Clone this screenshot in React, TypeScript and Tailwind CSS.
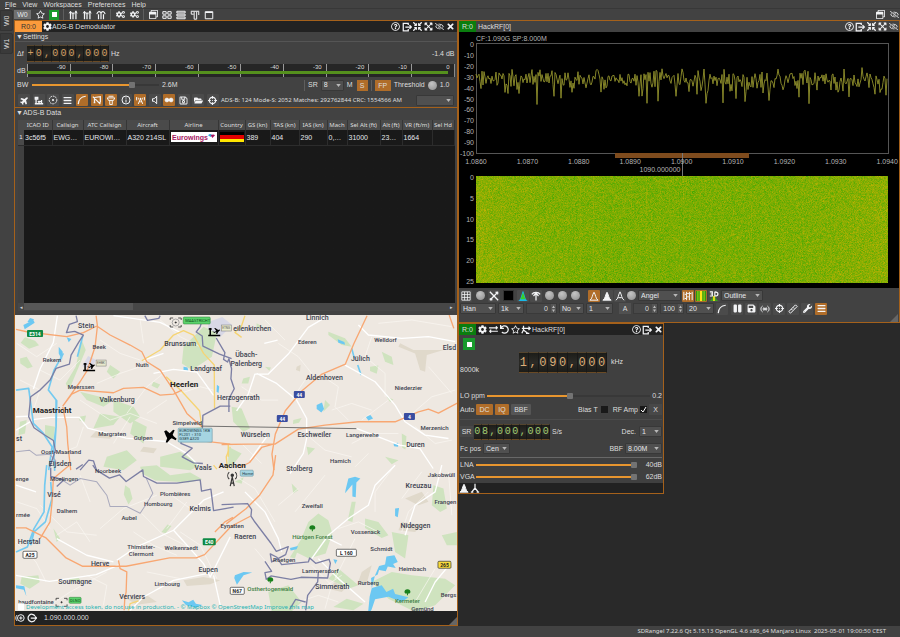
import { useEffect, useRef, useState } from 'react';
import type { ReactNode } from 'react';
import {
  FaBars,
  FaBroadcastTower,
  FaCog,
  FaCogs,
  FaCompressArrowsAlt,
  FaCrosshairs,
  FaExchangeAlt,
  FaExpandArrowsAlt,
  FaFolderOpen,
  FaPause,
  FaPlane,
  FaRegEyeSlash,
  FaRegQuestionCircle,
  FaRegSave,
  FaRegStar,
  FaRegWindowRestore,
  FaSave,
  FaTimes,
  FaUndo,
  FaWrench,
} from 'react-icons/fa';

type IconProps = { children: ReactNode };

function Draw({ children }: IconProps) {
  return (
    <svg viewBox="0 0 12 12" className="size-[10px]" fill="none" stroke="currentColor" strokeWidth="1.2">
      {children}
    </svg>
  );
}

const Sliders = () => (
  <Draw>
    <path d="M3 2v9M6 4v7M9.500 1v10" strokeWidth="1.500" />
    <path d="M1.500 4 3 1.500 4.500 4M8 4 9.500 1.500 11 4M4.500 5 6 3l1.500 2" />
  </Draw>
);
const Antennas = () => (
  <Draw>
    <path d="M3 5v6M6 4v7M9 5v6M1 5c1-4 4-4 5-1 1-3 4-3 5 1" strokeWidth="1.400" />
  </Draw>
);
const Grid4 = () => (
  <Draw>
    <path d="M1 2h4v3H1zM7 2h4v3H7zM1 7h4v3H1zM7 7h4v3H7z" />
  </Draw>
);
const Rows = () => (
  <Draw>
    <path d="M1 1.500h10v2H1zM1 5h10v2H1zM1 8.500h10v2H1z" />
  </Draw>
);
const Columns = () => (
  <Draw>
    <path d="M1 1.500h10M1.500 2v3h3M5 2v9h3V2M10.500 2v4" />
  </Draw>
);
const Frame = () => (
  <Draw>
    <path d="M1.500 2h9v8.500h-9zM1.500 3h9" />
  </Draw>
);
const Exit = () => (
  <Draw>
    <path d="M7.500 3.500V1.500h-6v9h6v-2" strokeWidth="1.500" />
    <path d="M4 6h7M9 3.800 11.200 6 9 8.200" strokeWidth="1.500" />
  </Draw>
);
const Compass = () => (
  <Draw>
    <circle cx="6" cy="6" r="4.600" strokeDasharray="2 1" />
    <circle cx="6" cy="6" r=".8" fill="currentColor" />
  </Draw>
);
const Tower = () => (
  <Draw>
    <path d="M1 10.500h10M2.500 10V3.500M1.500 3h3v2h-3zM4.500 8h5M6 10V7M9 10V6" strokeWidth="1.600" />
  </Draw>
);
const Curve = () => (
  <Draw>
    <path d="M1.500 11C2 5 4 2 10.500 1.500" strokeWidth="1.500" />
  </Draw>
);
const CutCurve = () => (
  <Draw>
    <path d="M1 2l9 9M3 3v6M3 3l7-1v7M2 9h2M8 9h2" strokeWidth="1.500" />
  </Draw>
);
const TowerFull = () => (
  <Draw>
    <path d="M1.500 3.500h9L9 6.500H3zM4.500 7v4.500h3V7M3 1.500h6" />
  </Draw>
);
const Info = () => (
  <Draw>
    <circle cx="6" cy="6" r="4.800" />
    <path d="M6 5.500V9M6 3v1.300" />
  </Draw>
);
const Speaker = () => (
  <Draw>
    <path d="M3 4.500h2l3-3v9l-3-3H3z" />
  </Draw>
);
const Dots = () => (
  <Draw>
    <circle cx="3.500" cy="6" r="2.200" fill="currentColor" />
    <circle cx="8.500" cy="6" r="2.200" fill="currentColor" />
    <path d="M3 6h6" />
  </Draw>
);
const Table = () => (
  <Draw>
    <path d="M1 1h10v10H1zM4.300 1v10M7.700 1v10M1 4.300h10M1 7.700h10" strokeWidth="1" />
  </Draw>
);
const Cross = () => (
  <Draw>
    <path d="M1 1l10 10M11 1 1 11M1 9l3 2M8 1l3 3" strokeWidth="1.600" />
  </Draw>
);
const Rainbow = () => (
  <svg viewBox="0 0 12 12" className="size-[10px]">
    <path d="M0 12C4 11 4 2 6 0c2 2 2 11 6 12z" fill="#19b8e8" />
    <path d="M2.500 10C4.500 8 5 3 6 2c1 1 1.500 6 3.500 8z" fill="#38d028" />
  </svg>
);
const ArrowUp = () => (
  <Draw>
    <path d="M6 11.500V2.500M3 6l3-3.500L9 6M1 4C3 .800 9 .800 11 4" strokeWidth="1.500" />
  </Draw>
);
const Peak = ({ filled = false }: { filled?: boolean }) => (
  <Draw>
    <path d="M1 11c3-1 3-7 5-9.500C8 4 8 10 11 11z" fill={filled ? 'currentColor' : 'none'} />
  </Draw>
);
const PeakHold = () => (
  <Draw>
    <path d="M1 11c3-1 3-7 5-10 2 3 2 9 5 10M4 8h4" />
  </Draw>
);
const Histogram = () => (
  <Draw>
    <path d="M1 1v10M4.300 1v10M7.700 1v10M11 1v10M2 4h2M5 7h2M8 3h2M5 3h2M2 9h2" />
  </Draw>
);
const Fall = () => (
  <svg viewBox="0 0 12 12" className="size-[10px]">
    <path d="M0 0h12v12H0z" fill="#2e9b12" />
    <path d="M4.500 0h3v12h-3z" fill="#ffe31a" />
    <path d="M1.500 0H3v12H1.500zM9 0h1.500v12H9z" fill="#8fc912" />
  </svg>
);
const ThreeD = () => (
  <svg viewBox="0 0 12 12" className="size-[10px]">
    <path d="M0 12c4-1 4-6 6-7 2 1 2 6 6 7z" fill="#3aa21d" />
    <path d="M5 6h2v6H5z" fill="#ffe31a" />
    <path d="M1 1h3v5H1M2 3.500h2M7 1v5c5 0 5-5 0-5" stroke="#fff" fill="none" strokeWidth="1.300" />
  </svg>
);
const Waves = () => (
  <Draw>
    <path d="M3 2.500C.5 4 .5 8 3 9.500M9 2.500c2.500 1.500 2.500 5.500 0 7M4.800 4c-1.300 1-1.300 3 0 4M7.200 4c1.300 1 1.300 3 0 4" />
    <circle cx="6" cy="6" r=".8" fill="currentColor" />
  </Draw>
);
const RulerIcon = () => (
  <Draw>
    <path d="M1 9 9 1l2 2-8 8zM4 6l1.500 1.500M6 4l1.500 1.500" />
  </Draw>
);
const Tripod = () => (
  <Draw>
    <path d="M6 1v5M6 6 2 11M6 6l4 5M1 11h3M8 11h3" strokeWidth="1.500" />
  </Draw>
);
const Presets = () => (
  <Draw>
    <path d="M3 1v5M3 6 1 10M3 6l5 4M1 4h10M9 2l2 2-2 2M6 10h4" strokeWidth="1.500" />
  </Draw>
);
const Source = () => (
  <Draw>
    <circle cx="7" cy="6" r="4" />
    <path d="M5 6h4M7 4v4M2.500 2.500C.5 4 .5 8 2.500 9.500" />
  </Draw>
);
const Loop = () => (
  <Draw>
    <path d="M9.500 3.500a4.500 4.500 0 1 0 0 5M4.500 6h7M9.500 4l2 2-2 2" strokeWidth="1.500" />
  </Draw>
);

type IconButtonProps = { label: string; on?: boolean; children: ReactNode };

function IconButton({ label, on = false, children }: IconButtonProps) {
  return (
    <button
      aria-label={label}
      className={`size-[12px] shrink-0 flex items-center justify-center rounded-[1px] text-[9px] text-gray-100 ${
        on ? 'bg-[#b06d29]' : 'bg-[#4b4b4b]'
      }`}
    >
      {children}
    </button>
  );
}

function BarButton({ label, children }: IconButtonProps) {
  return (
    <button aria-label={label} className="size-[10px] shrink-0 flex items-center justify-center text-[9px] text-gray-100">
      {children}
    </button>
  );
}

type DropProps = { label: string; value: string; width: string };

function Drop({ label, value, width }: DropProps) {
  return (
    <span className={`relative shrink-0 h-[11px] ${width}`}>
      <select
        aria-label={label}
        className="block w-full h-full appearance-none rounded-[1px] border border-[#383838] bg-[#505050] pl-[2px] text-gray-200"
      >
        <option>{value}</option>
      </select>
      <svg viewBox="0 0 6 4" className="absolute right-[3px] top-[4px] w-[5px] h-[3px] pointer-events-none">
        <path d="M0 0h6L3 4z" fill="#b8b8b8" />
      </svg>
    </span>
  );
}

type SpinProps = { label: string; value: string; width: string };

function Spin({ label, value, width }: SpinProps) {
  return (
    <span className={`flex shrink-0 h-[11px] bg-[#484848] border border-[#3a3a3a] ${width}`}>
      <input aria-label={label} defaultValue={value} className="min-w-0 flex-1 bg-transparent text-right pr-[3px]" />
      <svg viewBox="0 0 5 9" className="w-[5px] h-[9px] bg-[#555]" fill="#bbb">
        <path d="M1 4h3L2.500 1.500zM1 5.500h3L2.500 8z" />
      </svg>
    </span>
  );
}

function Knob({ label }: { label: string }) {
  return (
    <button
      aria-label={label}
      className="size-[9px] shrink-0 rounded-full bg-[radial-gradient(circle_at_40%_30%,#c4c4c4,#8d8d8d)]"
    />
  );
}

type SliderProps = { label: string; start: number };

function Slider({ label, start }: SliderProps) {
  const [value, setValue] = useState(start);
  return (
    <input
      type="range"
      aria-label={label}
      value={value}
      onChange={(e) => setValue(Number(e.target.value))}
      className="min-w-0 flex-1 h-[2px] appearance-none [&::-webkit-slider-thumb]:appearance-none [&::-webkit-slider-thumb]:size-[6px] [&::-webkit-slider-thumb]:rounded-[1px] [&::-webkit-slider-thumb]:bg-[#737373]"
      style={{ background: `linear-gradient(90deg, #e8962f ${value}%, #383838 ${value}%)` }}
    />
  );
}

type DialProps = { label: string; digits: string; size: string; color: string };

function Dial({ label, digits, size, color }: DialProps) {
  return (
    <div
      role="group"
      aria-label={label}
      className={`flex shrink-0 overflow-hidden bg-linear-to-b from-[#1b1b17] via-[#2b2a26] to-[#1b1b17] font-['Liberation_Mono'] ${size} ${color}`}
    >
      {digits.split('').map((d, i) => (
        <span
          key={i}
          className="min-w-0 flex-1 flex items-center justify-center border-r border-r-[#181818] border-t border-t-[#55452e] border-b border-b-[#6a4a25]"
        >
          {d}
        </span>
      ))}
    </div>
  );
}

function WindowButtons({ close = true }: { close?: boolean }) {
  return (
    <div className="ml-auto flex gap-px">
      <BarButton label="Help"><FaRegQuestionCircle /></BarButton>
      <BarButton label="Move to workspace"><Exit /></BarButton>
      <BarButton label="Shrink"><FaCompressArrowsAlt /></BarButton>
      <BarButton label="Maximize"><FaExpandArrowsAlt /></BarButton>
      <BarButton label="Hide"><FaRegEyeSlash /></BarButton>
      {close && <BarButton label="Close"><FaTimes /></BarButton>}
    </div>
  );
}

const Rule = () => <i className="h-[11px] w-px shrink-0 bg-[#5e5e5e]" />;

function TopBar() {
  return (
    <div className="h-[12px] pr-px flex items-center gap-[4px] border-t border-[#383838]">
      <button className="w-[17px] h-[9px] bg-[#707070] text-gray-200 leading-[9px]">W0</button>
      <BarButton label="Presets"><FaRegStar /></BarButton>
      <button aria-label="Start or stop" className="size-[10px] bg-[#189a2c] flex items-center justify-center">
        <span className="size-[5px] bg-white" />
      </button>
      <Rule />
      <BarButton label="Add Rx"><Sliders /></BarButton>
      <BarButton label="Add Tx"><Sliders /></BarButton>
      <BarButton label="Add MIMO"><Antennas /></BarButton>
      <Rule />
      <BarButton label="Add feature"><FaCogs /></BarButton>
      <BarButton label="Feature presets"><FaCogs /></BarButton>
      <Rule />
      <BarButton label="Cascade"><FaRegWindowRestore /></BarButton>
      <BarButton label="Tile"><Grid4 /></BarButton>
      <BarButton label="Stack"><Rows /></BarButton>
      <BarButton label="Tab stack"><Columns /></BarButton>
      <BarButton label="Tabs"><Frame /></BarButton>
      <div className="ml-auto flex gap-[4px]">
        <BarButton label="Normal"><FaRegWindowRestore /></BarButton>
        <BarButton label="Hide workspace"><FaRegEyeSlash /></BarButton>
      </div>
    </div>
  );
}

const levels = [-90, -80, -70, -60, -50, -40, -30, -20, -10, 0];

function LevelMeter() {
  return (
    <div className="relative flex-1 h-[13px] flex bg-[#262626] border-r border-[#8a8a8a]">
      {levels.map((l) => (
        <span key={l} className="flex-1 border-l border-[#9a9a9a] pr-[4px] text-right text-[6px] leading-[6px]">
          {l}
        </span>
      ))}
      <span className="absolute left-0 right-[6px] top-[7px] h-[3px] bg-[#55901d]" />
    </div>
  );
}

function Airline() {
  return (
    <span className="flex items-center justify-center h-[10px] bg-white text-[#a5155f] font-bold">
      Eurowings
      <svg viewBox="0 0 8 8" className="w-[7px] h-[8px]">
        <path d="M0 2C2 0 3 0 5 2L3 4z" fill="#35a8d8" />
        <path d="M3 2c2-1 4-1 5 0L5 5z" fill="#a5155f" />
      </svg>
    </span>
  );
}

function Flag() {
  return (
    <span className="block h-[10px] bg-[linear-gradient(#000_33%,#e00000_33%,#e00000_66%,#ffe600_66%)]" />
  );
}

type Column = { name: string; width: string; cell: ReactNode };

const columns: Column[] = [
  { name: 'ICAO ID', width: 'w-[28px]', cell: '3c56f5' },
  { name: 'Callsign', width: 'w-[31px]', cell: 'EWG…' },
  { name: 'ATC Callsign', width: 'w-[43px]', cell: 'EUROWI…' },
  { name: 'Aircraft', width: 'w-[43px]', cell: 'A320 214SL' },
  { name: 'Airline', width: 'w-[49px]', cell: <Airline /> },
  { name: 'Country', width: 'w-[27px]', cell: <Flag /> },
  { name: 'GS (kn)', width: 'w-[25px]', cell: '389' },
  { name: 'TAS (kn)', width: 'w-[29px]', cell: '404' },
  { name: 'IAS (kn)', width: 'w-[28px]', cell: '290' },
  { name: 'Mach', width: 'w-[20px]', cell: '0,…' },
  { name: 'Sel Alt (ft)', width: 'w-[33px]', cell: '31000' },
  { name: 'Alt (ft)', width: 'w-[22px]', cell: '23…' },
  { name: 'VR (ft/m)', width: 'w-[30px]', cell: '1664' },
  { name: 'Sel Hd', width: 'w-[22px]', cell: '' },
];

function AircraftTable() {
  return (
    <div className="flex-1 min-h-[120px] ml-[3px] mr-[2px] flex flex-col bg-[#191919]">
      <div className="flex-1 bg-linear-to-r from-[#404040] from-[6px] to-[#191919] to-[6px]">
        <table className="w-full table-fixed border-collapse text-[6px] leading-[9px]">
          <thead>
            <tr className="h-[10px] bg-[#4a4a4a] font-['Noto_Sans']">
              <th className="w-[6px]" />
              {columns.map((c) => (
                <th key={c.name} className={`font-normal whitespace-nowrap border-r border-[#363636] p-0 ${c.width}`}>
                  {c.name}
                </th>
              ))}
            </tr>
          </thead>
          <tbody>
            <tr className="h-[15px] border-b border-[#2c2c2c] text-gray-200">
              <th className="font-normal p-0 bg-[#4a4a4a]">1</th>
              {columns.map((c) => (
                <td key={c.name} className="whitespace-nowrap border-r border-[#2c2c2c] px-px py-0 text-[7px]">
                  {c.cell}
                </td>
              ))}
            </tr>
          </tbody>
        </table>
      </div>
      <div className="h-[8px] flex items-center bg-[#474747] text-[5px] text-gray-300">
        <button aria-label="Scroll left" className="w-[6px] leading-[8px]">◂</button>
        <span className="h-[7px] w-[109px] bg-[#575757]" />
        <button aria-label="Scroll right" className="ml-auto w-[6px] leading-[8px]">▸</button>
      </div>
    </div>
  );
}

type Kind = 'green' | 'white' | 'thin' | 'orange' | 'yellow' | 'border' | 'dashed' | 'water' | 'river' | 'hill';

const kinds: Record<Kind, string> = {
  green: 'fill-[#cfe3bf]',
  hill: 'fill-[#e0d9cb]',
  thin: 'fill-none stroke-[#faf7f3] stroke-2',
  white: 'fill-none stroke-white stroke-4',
  yellow: 'fill-none stroke-[#f6d473] stroke-4',
  orange: 'fill-none stroke-[#f8a772] stroke-4',
  river: 'fill-none stroke-[#74caf0] stroke-5',
  water: 'fill-[#6cc8f2]',
  dashed: 'fill-none stroke-[#aaaabd] stroke-3',
  border: 'fill-none stroke-[#7c7fa4] stroke-4',
};

// each tile is drawn on a 3x grid from its own corner
const tiles: { x: number; y: number; shapes: [Kind, string][] }[] = [
  {
    x: 0,
    y: 300,
    shapes: [
      ['green', 'M60 175l20-5 18 30-15 5-22-15zM75 112l30 10 12 14-30 10-25-18zM245 120l12 30-25 60-25 60-10-20 30-50zM550 140l60-60 40 20-15 70-60 40-30-20zM330 195l30 20-20 20-20-20zM240 275l60 15 40 10-30 20-50-20zM340 300l60 20 20 30-30 20-50-35zM400 360l40 20-10 50-40-30zM300 340l60 10-20 25-60 10zM135 375l30 5-5 40-25-10zM238 350l20-4-5 20-15-5zM320 470l60-20 30 30-40 30-60-10zM480 470l60-15 60 40-30 15-90-10zM60 365l20-5-5 40-20 5zM460 245l20 8-8 12-18-8zM545 390l60-10-8 30-30 10z'],
      ['hill', 'M290 390l50 14-10 12-60-5zM430 440l40 5-10 14-40-5z'],
      ['water', 'M70 75l30-15 4 8-30 20zM82 66l8-12 12 4-8 10zM550 200l12 2 2 10-14-2zM650 254l7 5-2 20-6-4zM176 140l12 15-2 25-10-20zM200 112l14 5-8 10z'],
      ['thin', 'M50 130l60 40 60-40M120 210l60 30 60-60M300 120l60 40 60 20M240 300l90 60 60-20 80 30M250 380l-20 60-50 20M380 340l60-80 50-40M420 60l10 70M340 430l50-80M540 280l60-20 40 10M60 240l60 30-20 60M290 250l70-30 60-20M440 340l60-40M480 60l60 50 60 30'],
      ['white', 'M172 47l-12 80-40 80-20 60M48 390l55-32 50-6 85 0 25 32 115 30 120 10 60 35 50 50M340 47l140 20 60 30M460 220l60-12 70 8 50 70M48 350l40-2M430 180l60-20'],
      ['river', 'M248 108l-16 62M48 270l38-5 14 105 30 30 26 40-10 70'],
      ['river', 'M190 160l-28 50-17 60 25 32-2 80-8 60 4 70M168 300l0 80-4 60'],
      ['yellow', 'M425 182l55-32 40-45 30-13 30 13 30 55 32 35 1 130M498 230l45 42 55 60 7 50M690 440l-12 30 4 40'],
      ['orange', 'M48 88l36 8 116 14 50-12 40-20M288 47l4 31-7 62-23 70-22 35-25 35-27 38M290 78l40 27 60 30 35 20 15 30 40 25 40 60 40 70 45 40M188 318l27-36 25-12 100 8 30-13 60-3 50 23 40-3 25-12M188 320l12 60 3 50 9 80M605 422l85 10'],
      ['dashed', 'M48 455l40-5 20 15 40-3 20 20'],
      ['border', 'M228 47l4 18-24 8-9 25 25-4 26 11-13 20-24 40-5 27-40 13-18 35-30 30-28 20-6 60 16 33 26 18 32 20 6 30-17 50M434 47l8 14 34-6 4-8M606 60l-6 20-12 16 18 12 2 30 50 24 36 14M690 318l-30 0-52 28-2 52-8 10-52 2-4 20 34 14-30 26 34 18 28 2M240 510l26-30 14 2 10 30'],
    ],
  },
  {
    x: 228,
    y: 300,
    shapes: [
      ['green', 'M300 95l50 20 20 25-30-5-40-30zM460 155l30 15 5 25-25-10zM425 200l25-4-5 25-20-8zM45 235l20-5-5 20-20 0zM195 360l25-6-8 14-18 4zM475 290l20 8-10 8zM10 320l30 5 25 60-20 10-30-30zM0 440l40 20-30 40-10-10zM235 440l25 5-20 20zM290 300l15 15-20 20zM85 70l15 8-15 8zM470 470l40 10-20 12zM520 400l14 8-3 40-10-6zM110 200l18 2-5 10z'],
      ['hill', 'M515 130l40 20 90 0-50 15-5 50-15-5-15-50-50-20zM205 200l12-6-2 20-12-4z'],
      ['water', 'M265 315l16-8 6 20-8 10-14-10zM412 350l14-5 8 10-14 6zM495 430l14-2 0 12-12-2zM328 118l20 8 2 8-20-6z'],
      ['river', 'M370 145l8 30M388 195l10 30'],
      ['thin', 'M40 260l60 40 50 0M150 130l60 40 40 50M190 300l40-60M300 240l30 20-10 60 40 40M430 110l-20 60 60 50 0 70M540 350l70-60 70-20M560 380l60 50 50-10M310 330l60-20 60 20M230 400l60 50 80 20M370 430l60-30 80 0M420 460l-40 40M110 60l60 60M600 200l70 80M450 70l100-10 120 20M40 430l60 60M480 300l-80 60'],
      ['white', 'M300 47l-60 35-60 80-60 60-40 0-20 60-35 50M350 195l90 50 60 70 30 50 60 40 70 10M390 75l30 30 100 10 80-5 80 15M85 220l60 30 60 50 30 55 0 60-10 45-40 60M115 410l-50 70M384 385l130 50 60 10 40 60M108 130l40-10'],
      ['yellow', 'M50 47l-10 30-20 20 20 15M0 430l0 40'],
      ['orange', 'M416 47l-40 85-25 60-70 30-60 50-50 60-30 70-10 60 6 48M-20 433l80-1 80 0 70-45 80-12 100-10 110 0 70-30 30-8 30 12 60-32M135 432l-35 10-36 45-30 15M662 45l14 40'],
      ['border', 'M-36 114l20 34 6 10-4 20 12 8 4-10 8 30-2 30 10 30-16 30 0 40'],
    ],
  },
  {
    x: 0,
    y: 465,
    shapes: [
      ['green', 'M375 60l14 10 8 30-12 18-14-30zM420 5l50-5 40 30 60-8 36 20-40 10-100-6-40-20zM484 200l18-22 12 4-18 22zM65 335l50-5 4 20-30 20-28-15zM540 80l4 14M206 340l30-2 6 8-30 4zM160 190l20 30-10 10z'],
      ['hill', 'M550 345l60-10 50 10-30 12-70 5zM380 400l60-10 30 20-60 8z'],
      ['water', 'M545 405l20 6 14-8 8 12 20 4-20 8-30-8zM48 360l25 3 6 30-8-20-23-4z'],
      ['thin', 'M50 110l60 20 40 60M170 210l60-40 40 60M240 30l30 80M300 190l70-60 100-40M400 200l60 40 70 30M48 230l60 60 30 60M120 120l80 80 90 10M440 320l100 20M500 80l70 50M260 330l60 30-10 60M150 420l60-40 110-60M540 200l60 40 50 100M425 145l60 60 80 40M560 110l-60 80'],
      ['white', 'M340 290l-80-20-90-50M350 285l60-40 110-50 90-90 60-25M48 330l100 18 140-20 70-30M640 330l20 90M520 195l90 100 20 40 60-120M48 60l60 20M390 435l40-40 90-50 100-20'],
      ['river', 'M140 0l-6 60-2 80-30 50-20 55-34 15M152 50l4 50-20 70-34 30-10 40'],
      ['orange', 'M208 0l-48 40-4 70-6 60-30 50M48 188l30 0 60 30 60 60 50 25 130 0 130-25 80 0 25-10 80-85 57-30M355 285l5 25 20 10-2 60-4 20-2 35'],
      ['yellow', 'M385 435l5-20 25-8M640 0l10 12'],
      ['dashed', 'M180 40l30 20 30-20 50 10 30 40 10 34 50 0 40 20 20-30 18-30-20-46'],
      ['border', 'M152 8l0 26 40 10-22 20M228 12l20-14M278 0l10 14 40 25 30-10 20 20 50-35 2 20 40 20 60 0 70-10 4 34 28-6 8 64 60-10'],
    ],
  },
  {
    x: 228,
    y: 465,
    shapes: [
      ['green', 'M240 170l30-25 30 20 12 40-20 60-50 15-40-20zM615 60l30 10 10 60-20 10-25-20zM430 350l60-30 60 10 100 10 30 20-60 60-60 20-80-40zM410 160l40 10 30 40-20 8-50-30zM490 200l50 10-10 70-30-20zM120 380l60-20 40 50-30 28-60 0zM370 110l12 0-10 60-14-4zM220 220l-20 60-15-4zM330 310l60 50-30 10-60-30zM190 55l20 20-15 10zM640 210l45-10 0 40-30 0zM355 400l50 15-30 20-60-10zM20 50l26-14-6 20z'],
      ['hill', 'M530 100l50-20 20 30-30 10zM400 320l30-20-14 50-30 10zM520 170l60 10-20 20-50-5zM320 350l30 20-10 10-40-10z'],
      ['water', 'M360 40l20-5 16 5-12 12-2 44-10-2 0-36-22 26 2-12zM500 130l12-2-4 28-8-4zM185 248l24-6-4 10-18 4zM315 282l12 2-6 12zM20 330l26-10 26 2-26 8-20 28-8-20zM440 330l12-28 18-4 4-24 24-4 10 20-14 6 8 12-24-4-6 14-20-4-4 14-20 10 2 30 30-8 14 20 20-10 6 16 40 10-20 14-40-16-20 4-20 4-10 30-12 20 6-60-10 40z'],
      ['thin', 'M0 20l80 50 60 100M210 70l-60 50M290 30l-90 110M330 190l60-20 60 30M600 80l-60 60-20 60M620 310l-60 100M250 300l60 60-20 70M340 330l-60 40M500 0l-60 80 0 60M580 20l-60 80M80 250l50 60M660 20l10 130M210 410l60-20 60 20M380 220l-60 120'],
      ['white', 'M500 0l-60 60-20 60-60 40-60 50-50 70M50 80l60 60 40 80 10 40M270 280l60 60 80 70M640 0l-20 80-60 40-30 90M670 290l-50 60-30 60M340 240l-40-20'],
      ['orange', 'M142 -30l-8 60-40 60-40 40-60 46M-40 200l30-30 24-14'],
      ['border', 'M-20 118l78-3 12 18-2 20 10 15 50 66 16 24 36-14-8 24-42 22-4-24 20 10 14 22 80-8 4-12 18 16 40-12 4 12-8 44-80-2-30 6-60-10-14 10-4-20 20-4-20-30M270 320l-2 30-30 40-6 45M232 410l-30-8-18 30'],
    ],
  },
];

type Label = [text: string, x: number, y: number, size: 6 | 7 | 8];

const towns: Label[] = [
  ['Stein', 86, 326, 7],
  ['Beek', 99, 346, 6],
  ['Rekem', 52, 359, 6],
  ['Meerssen', 81, 386, 6],
  ['Valkenburg', 117, 400, 7],
  ['Maastricht', 52, 410, 8],
  ['Brunssum', 180, 344, 7],
  ['Nuth', 142, 364, 6],
  ['Landgraaf', 206, 369, 7],
  ['Heerlen', 184, 384, 8],
  ['Herzogenrath', 238, 398, 7],
  ['Simpelveld', 187, 422, 6],
  ['Margraten', 112, 433, 6],
  ['Gulpen', 143, 437, 6],
  ['Oost-Maarland', 61, 451, 6],
  ['Eijsden', 60, 464, 7],
  ['st', 19, 439, 7],
  ['Linnich', 317, 318, 7],
  ['eilenkirchen', 252, 329, 7],
  ['Ederen', 307, 341, 6],
  ['Welldorf', 385, 339, 6],
  ['Elsd', 449, 348, 7],
  ['Übach-', 246, 355, 7],
  ['Palenberg', 246, 364, 7],
  ['Jülich', 360, 359, 7],
  ['Aldenhoven', 324, 378, 7],
  ['Niederzier', 408, 387, 6],
  ['Würselen', 255, 435, 7],
  ['Eschweiler', 314, 435, 7],
  ['Langerwehe', 362, 434, 6],
  ['Merzenich', 434, 427, 6],
  ['Duren', 415, 445, 7],
  ['Hamich', 340, 460, 6],
  ['Stolberg', 299, 469, 7],
  ['Aachen', 232, 465, 8],
  ['Vaals', 203, 468, 7],
  ['Noorbeek', 108, 470, 6],
  ['enge', 22, 478, 6],
  ['Moelingen', 64, 478, 6],
  ['Visé', 54, 495, 7],
  ['rmée', 23, 514, 6],
  ['Dalhem', 67, 510, 6],
  ['Plombières', 175, 493, 6],
  ['Hombourg', 158, 503, 6],
  ['Kelmis', 200, 509, 7],
  ['Aubel', 129, 517, 6],
  ['Eynatten', 232, 525, 6],
  ['Herstal', 29, 542, 7],
  ['Thimister-', 141, 546, 6],
  ['Clermont', 141, 553, 6],
  ['Welkenraedt', 181, 547, 6],
  ['Herve', 100, 564, 7],
  ['Eupen', 208, 570, 7],
  ['Soumagne', 75, 582, 7],
  ['Limbourg', 167, 583, 6],
  ['Verviers', 132, 597, 7],
  ['haudfontaine', 36, 601, 6],
  ['Zweifall', 312, 505, 6],
  ['Vossenack', 365, 531, 6],
  ['Kreuzau', 418, 486, 7],
  ['Jakobwüll', 441, 474, 6],
  ['Frangen', 445, 501, 6],
  ['Nideggen', 415, 526, 7],
  ['Schmidt', 381, 548, 6],
  ['Raeren', 245, 537, 7],
  ['Roetgen', 284, 559, 6],
  ['Lammersdorf', 320, 570, 6],
  ['Simmerath', 332, 587, 7],
  ['Rurberg', 368, 582, 6],
  ['Heimbach', 412, 568, 6],
  ['Gemünd', 422, 608, 6],
  ['Bergs', 448, 594, 6],
];

const forests: Label[] = [
  ['Hürtgen Forest', 312, 536, 6],
  ['Osthertogenwald', 270, 588, 6],
  ['Kermeter', 407, 600, 6],
];

const sizes = {
  6: 'text-[6px] font-medium',
  7: 'text-[7px] font-medium',
  8: 'text-[8px] font-bold fill-[#222]',
};

const shields = [
  { text: 'E314', x: 35, y: 333, w: 16, box: 'fill-[#0f8a45]', ink: 'fill-white' },
  { text: 'E40', x: 209, y: 541, w: 13, box: 'fill-[#0f8a45]', ink: 'fill-white' },
  { text: 'A25', x: 30, y: 554, w: 14, box: 'fill-white stroke-[#333]', ink: 'fill-[#222]' },
  { text: 'N67', x: 237, y: 590, w: 14, box: 'fill-white stroke-[#333]', ink: 'fill-[#222]' },
  { text: 'L 160', x: 346, y: 552, w: 20, box: 'fill-white stroke-[#333]', ink: 'fill-[#222]' },
  { text: '265', x: 444, y: 564, w: 13, box: 'fill-[#f9dc3c] stroke-[#333]', ink: 'fill-[#222]' },
  { text: '44', x: 299, y: 394, w: 11, box: 'fill-[#3a4da0]', ink: 'fill-white' },
  { text: '44', x: 282, y: 418, w: 11, box: 'fill-[#3a4da0]', ink: 'fill-white' },
  { text: '4', x: 409, y: 416, w: 11, box: 'fill-[#3a4da0]', ink: 'fill-white' },
];

const airports = [
  { x: 83, y: 360, name: 'EHBK' },
  { x: 208, y: 325, name: 'ETNG' },
];

function AirMap() {
  return (
    <svg viewBox="15 315 441 296" className="block w-full bg-[#eee8e1] font-['Roboto']" role="img" aria-label="Aircraft map">
      <path d="M208 322l14-5 10 8-12 12-12-2z" fill="#d8d8e6" />
      <path d="M88 356l8 4-6 10-8-4z" fill="#d8d8e6" />
      {tiles.map((t) => (
        <g key={`${t.x}-${t.y}`} transform={`translate(${t.x} ${t.y}) scale(${1 / 3})`} strokeLinejoin="round">
          {t.shapes.map(([kind, d]) => (
            <path key={d} d={d} className={kinds[kind]} />
          ))}
        </g>
      ))}
      <g textAnchor="middle" dominantBaseline="central">
        <g className="fill-[#3c424f]">
          {towns.map(([text, x, y, size]) => (
            <text key={text} x={x} y={y} className={sizes[size]}>{text}</text>
          ))}
        </g>
        {forests.map(([text, x, y]) => (
          <g key={text}>
            <text x={x} y={y} className="text-[6px] font-medium fill-[#3e8044]">{text}</text>
            <path d={`M${x - 3} ${y - 8}a3 3 0 0 1 6 0q-1 2-2.500 1v2h-1v-2q-1.500 1-2.500-1`} fill="#18801c" />
          </g>
        ))}
        {shields.map((s) => (
          <g key={`${s.text}${s.y}`}>
            <rect x={s.x - s.w / 2} y={s.y - 3} width={s.w} height="7" rx="1" strokeWidth=".7" className={s.box} />
            <text x={s.x} y={s.y + 1} className={`text-[5px] font-bold ${s.ink}`}>{s.text}</text>
          </g>
        ))}
      </g>
      {airports.map((a) => (
        <g key={a.name}>
          <path
            d={`M${a.x} ${a.y + 10.500}h12M${a.x + 2} ${a.y + 10}v-7M${a.x + 0.500} ${a.y + 4}h3`}
            stroke="#000"
            strokeWidth="1.500"
          />
          <path d={`M${a.x + 4} ${a.y + 6}l2 1 2-1-2-3 1 0 3 2 1-.500 1 .500-2 2-1 2-1 0 0-2-2 1z`} />
          <rect x={a.x + 13} y={a.y} width="10" height="6" fill="#e8e8cc" stroke="#777" strokeWidth=".5" />
          <text x={a.x + 14} y={a.y + 4} className="text-[3px] fill-[#555]">{a.name}</text>
        </g>
      ))}
      <g fill="none" stroke="#333" strokeWidth=".8">
        <path d="M170 320v-2h3M178 318h3v2M181 325v2h-3M173 327h-3v-2M56 600v-2h3M64 598h3v2M67 604v2h-3M59 606h-3v-2" />
        <circle cx="175.500" cy="322.500" r="3.500" stroke="#999" />
        <path d="M175 322h1v1h-1zM61 601.500h1v1h-1z" fill="#333" />
      </g>
      <rect x="183" y="317" width="27" height="7" rx="1" fill="#5bd36c" stroke="#2b7a35" strokeWidth=".5" />
      <text x="185" y="322" className="text-[4px] fill-[#0e4a18]">MAASTRICHT</text>
      <rect x="69" y="597" width="12" height="6" rx="1" fill="#5bd36c" stroke="#2b7a35" strokeWidth=".5" />
      <text x="70" y="602" className="text-[4px] fill-[#0e4a18]">DLNO</text>
      <path d="M201 426l155 2.500" stroke="#555" strokeWidth=".8" />
      <path
        d="M164 431l2-1 3.500 3 3.500-3.500 1.500 .500-2 4.500 1 1.500 3 2.500-1 1.500-4-2-1.500 1-3 3.500-1.500-.500 1.500-4-1.500-3z"
        fill="#000"
      />
      <rect x="178" y="428" width="34" height="14" rx="1" fill="#a5d5e2" stroke="#5c8b98" strokeWidth=".5" />
      <text className="text-[4px] fill-[#1d3a44]">
        <tspan x="179" y="432">EUROWINGS 1KB</tspan>
        <tspan x="179" y="436">FL201 ↑ 310</tspan>
        <tspan x="179" y="440">G389 A320</tspan>
      </text>
      <g fill="none" stroke="#333">
        <path d="M230 486l2-9 2 9M230.500 483h3" strokeWidth="1.200" />
        <path d="M229 479c-2-2-2-5 0-7M235 479c2-2 2-5 0-7" />
        <circle cx="232" cy="475" r="1.200" fill="#333" />
      </g>
      <rect x="240" y="470" width="13" height="6" rx="1" fill="#a5d5e2" stroke="#5c8b98" strokeWidth=".5" />
      <text x="242" y="475" className="text-[4px] fill-[#1d3a44]">Home</text>
      <rect x="18" y="603" width="6" height="7" fill="#fff" />
      <text x="26" y="609" className="text-[6px] font-['Noto_Sans'] fill-[#25b3b3]">
        Development access token, do not use in production. - © Mapbox © OpenStreetMap Improve this map
      </text>
    </svg>
  );
}

function AdsbPanel() {
  return (
    <section className="flex flex-col border border-[#a5611b]">
      <header className="h-[11px] pr-px flex items-center bg-[#222]">
        <button className="w-[27px] h-full bg-[#fb9a3b] text-[#333] leading-[11px]">R0:0</button>
        <BarButton label="Settings"><FaCog /></BarButton>
        <h1>ADS-B Demodulator</h1>
        <WindowButtons />
      </header>
      <h2 className="h-[10px] pl-[1px] flex items-center border-b border-[#555]">▼Settings</h2>
      <div className="h-[21px] pt-[2px] px-[2px] flex items-center">
        <span className="w-[10px]">Δf</span>
        <Dial label="Frequency offset" digits="+0,000,000" size="w-[82px] h-[17px] text-[10px]" color="text-[#cf9e63]" />
        <span className="ml-[2px]">Hz</span>
        <span className="ml-auto">-1.4 dB</span>
      </div>
      <div className="h-[14px] px-[2px] flex items-center">
        <span className="w-[10px] pt-[2px]">dB</span>
        <LevelMeter />
      </div>
      <div className="h-[16px] px-[2px] flex items-center gap-[3px]">
        <div className="w-[142px] flex items-center gap-[4px]">
          <span>BW</span>
          <Slider label="Bandwidth" start={80} />
        </div>
        <span>2.6M</span>
        <div className="ml-auto flex items-center gap-[3px]">
          <Rule />
          <span>SR</span>
          <Drop label="Sample rate" value="8" width="w-[23px]" />
          <span>M</span>
          <button className="ml-px size-[11px] bg-[#b06d29] leading-[11px]">S</button>
          <Rule />
          <button className="w-[16px] h-[11px] bg-[#b06d29] leading-[11px]">FP</button>
          <span>Threshold</span>
          <Knob label="Threshold" />
          <span className="mr-[5px]">1.0</span>
        </div>
      </div>
      <div className="h-[15px] px-[3px] flex items-center gap-[2px] border-b border-[#a5611b]">
        <div className="w-[201px] shrink-0 flex justify-between">
          <IconButton label="Flight info"><FaPlane className="-rotate-45" /></IconButton>
          <IconButton label="Airports"><Tower /></IconButton>
          <IconButton label="Find on map"><Compass /></IconButton>
          <IconButton label="Columns"><FaBars /></IconButton>
          <IconButton label="Flight paths" on><Curve /></IconButton>
          <IconButton label="All flight paths" on><CutCurve /></IconButton>
          <IconButton label="Airspaces" on><TowerFull /></IconButton>
          <IconButton label="Aircraft info"><Info /></IconButton>
          <IconButton label="Feed" on><FaBroadcastTower /></IconButton>
          <IconButton label="Speech"><Speaker /></IconButton>
          <IconButton label="Statistics" on><Dots /></IconButton>
          <IconButton label="Save log"><FaRegSave /></IconButton>
          <IconButton label="Open log"><FaFolderOpen /></IconButton>
          <IconButton label="Center map"><FaCrosshairs /></IconButton>
        </div>
        <p className="text-[6px] font-['Noto_Sans'] whitespace-nowrap flex-1">
          ADS-B: 124 Mode-S: 2052 Matches: 292762844 CRC: 1554566 AM
        </p>
        <Drop label="AM device" value="" width="w-[38px]" />
      </div>
      <h2 className="h-[9px] mb-[3px] pl-[1px] flex items-center">▼ADS-B Data</h2>
      <AircraftTable />
      <div className="h-[4px]" />
      <AirMap />
      <footer className="h-[14px] flex items-center gap-[2px] bg-[#222]">
        <BarButton label="Source"><Source /></BarButton>
        <BarButton label="Stream"><Loop /></BarButton>
        <span className="ml-[5px]">1.090.000.000</span>
        <Grip />
      </footer>
    </section>
  );
}

const Grip = () => (
  <svg viewBox="0 0 8 8" className="ml-auto self-end size-[8px]">
    <path d="M0 8 8 0v8z" fill="#666" />
  </svg>
);

function makeRandom(seed: number) {
  let s = seed;
  return () => {
    s = (s * 1664525 + 1013904223) % 4294967296;
    return s / 4294967296;
  };
}

function tracePath() {
  const rand = makeRandom(11);
  let d = '';
  for (let i = 0; i <= 411; i++) {
    const power = -Math.log(rand() + 0.001);
    const db = Math.max(-55, -29 + 11 * Math.log10(power + 0.003) - (i % 2) * 3);
    d += `${i ? 'L' : 'M'}${476 + i} ${(44 - db * 1.1).toFixed(1)}`;
  }
  return d;
}

const trace = tracePath();
const dbTicks = [0, -10, -20, -30, -40, -50, -60, -70, -80, -90, -100];
const freqTicks = ['1.0860', '1.0870', '1.0880', '1.0890', '1.0900', '1.0910', '1.0920', '1.0930', '1.0940'];

function Spectrum() {
  return (
    <svg viewBox="459 32 440 144" className="block w-full text-[7px] fill-[#b5b5b5]" role="img" aria-label="Spectrum">
      <text x="476" y="41">CF:1.090G SP:8.000M</text>
      <rect x="476.500" y="43.500" width="412" height="110" fill="none" stroke="#555" />
      <g textAnchor="end">
        {dbTicks.map((db, i) => (
          <text key={db} x="474" y={47 + i * 11 - (i > 5 ? 1 : 0)}>{db}</text>
        ))}
      </g>
      <path d={trace} fill="none" stroke="#92922c" strokeWidth=".9" />
      <rect x="615" y="153" width="134" height="5" fill="#7e4b1d" />
      <path d="M682.500 153v23" stroke="#777" />
      <g textAnchor="middle">
        {freqTicks.map((f, i) => (
          <text key={f} x={476 + i * 51.4} y="164">{f}</text>
        ))}
        <text x="660" y="172">1090.000000</text>
      </g>
    </svg>
  );
}

function Waterfall() {
  const ref = useRef<HTMLCanvasElement>(null);

  useEffect(() => {
    const canvas = ref.current;
    const ctx = canvas?.getContext('2d');
    if (!canvas || !ctx) return;
    const { width, height } = canvas;
    const img = ctx.createImageData(width, height);
    const rand = makeRandom(5);
    const lines = [104, 117, 170, 207, 229, 275];
    for (let y = 0; y < height; y++) {
      for (let x = 0; x < width; x++) {
        const edge = Math.pow(Math.abs(x - width / 2) / (width / 2), 3) * 0.14;
        const noise = (rand() + rand() + rand() + rand()) / 4;
        const n = noise + edge + (lines.includes(x) ? 0.1 : 0);
        const p = (y * width + x) * 4;
        img.data[p] = 52 + n * 140;
        img.data[p + 1] = 168 + n * 10;
        img.data[p + 2] = 3;
        img.data[p + 3] = 255;
      }
    }
    ctx.putImageData(img, 0, 0);
  }, []);

  return (
    <div className="flex pr-[11px] pb-[5px] h-[112px]">
      <div className="w-[17px] pr-[2px] -my-[2px] flex flex-col justify-between text-right leading-[7px] text-[#b5b5b5]">
        {[0, 5, 10, 15, 20, 25].map((s) => (
          <span key={s}>{s}</span>
        ))}
      </div>
      <canvas ref={ref} width={412} height={107} className="min-w-0 flex-1 h-[107px]" />
    </div>
  );
}

function SpectrumPanel() {
  return (
    <section className="border border-[#a5611b]">
      <header className="h-[11px] pr-px flex items-center">
        <button className="w-[17px] h-full bg-[#0a7d0e] leading-[11px]">R:0</button>
        <h1 className="ml-[2px]">HackRF[0]</h1>
        <WindowButtons close={false} />
      </header>
      <div className="bg-black">
        <Spectrum />
        <Waterfall />
      </div>
      <div className="h-[34px] px-px pt-px">
        <div className="h-[13px] flex items-center gap-[1px]">
          <IconButton label="Grid"><Table /></IconButton>
          <div className="flex w-[14px] justify-center"><Knob label="Grid intensity" /></div>
          <IconButton label="Clear"><Cross /></IconButton>
          <button aria-label="Color" className="mx-[2px] size-[11px] bg-black border border-[#333]" />
          <IconButton label="Phosphor"><Rainbow /></IconButton>
          <IconButton label="Max hold"><ArrowUp /></IconButton>
          <div className="flex gap-[4px] px-[2px]">
            <Knob label="Decay" />
            <Knob label="Decay divisor" />
            <Knob label="Stroke" />
          </div>
          <div className="flex gap-px pl-[5px]">
            <IconButton label="Current" on><Peak /></IconButton>
            <IconButton label="Filled"><Peak filled /></IconButton>
            <IconButton label="Max"><PeakHold /></IconButton>
          </div>
          <Knob label="Trace intensity" />
          <Drop label="Color map" value="Angel" width="w-[43px] ml-px" />
          <IconButton label="Histogram" on><Histogram /></IconButton>
          <IconButton label="Waterfall" on><Fall /></IconButton>
          <IconButton label="3D spectrogram"><ThreeD /></IconButton>
          <Drop label="Style" value="Outline" width="w-[42px]" />
        </div>
        <div className="h-[13px] flex items-center gap-[2px]">
          <Drop label="Window" value="Han" width="w-[36px]" />
          <Drop label="FFT size" value="1k" width="w-[26px]" />
          <Spin label="Overlap" value="0" width="w-[31px]" />
          <Drop label="Averaging" value="No" width="w-[25px]" />
          <Drop label="Averages" value="1" width="w-[27px]" />
          <button className="ml-[4px] w-[12px] h-[11px] bg-[#505050] leading-[11px]">A</button>
          <Spin label="Reference" value="0" width="w-[25px]" />
          <Spin label="Range" value="100" width="w-[24px]" />
          <Drop label="FPS" value="20" width="w-[28px]" />
          <IconButton label="Linear"><Curve /></IconButton>
          <div className="ml-px flex gap-[2px]">
            <IconButton label="Pause"><FaPause /></IconButton>
            <IconButton label="Save"><FaSave /></IconButton>
            <IconButton label="Server"><Waves /></IconButton>
            <IconButton label="Markers"><FaCrosshairs /></IconButton>
            <IconButton label="Measure"><RulerIcon /></IconButton>
            <IconButton label="Calibrate"><FaWrench /></IconButton>
            <IconButton label="Controls" on><FaBars /></IconButton>
          </div>
        </div>
        <div className="h-[7px] flex"><Grip /></div>
      </div>
    </section>
  );
}

function DevicePanel() {
  return (
    <section className="w-[206px] border border-[#a5611b] bg-[#404040]">
      <header className="h-[11px] flex items-center gap-px bg-[#222]">
        <button className="w-[17px] h-full bg-[#0a7d0e] leading-[11px]">R:0</button>
        <BarButton label="Device"><FaCog /></BarButton>
        <BarButton label="Change device"><FaExchangeAlt /></BarButton>
        <BarButton label="Reload"><FaUndo /></BarButton>
        <BarButton label="Presets"><FaRegStar /></BarButton>
        <BarButton label="Channels"><Presets /></BarButton>
        <h1 className="whitespace-nowrap">HackRF[0]</h1>
        <div className="ml-auto flex gap-px">
          <BarButton label="Help"><FaRegQuestionCircle /></BarButton>
          <BarButton label="Move"><Exit /></BarButton>
          <BarButton label="Close"><FaTimes /></BarButton>
        </div>
      </header>
      <div className="px-[1px]">
        <div className="h-[53px] pt-[3px] flex">
          <div className="w-[59px] flex flex-col">
            <button aria-label="Start or stop" className="ml-[3px] size-[12px] bg-[#189a2c] flex items-center justify-center">
              <span className="size-[5px] bg-white" />
            </button>
            <span className="mt-[16px]">8000k</span>
          </div>
          <div className="pt-[14px] flex items-start gap-[4px]">
            <Dial label="Center frequency" digits="1,090,000" size="w-[88px] h-[21px] text-[12px]" color="text-[#dcae78]" />
            <span className="pt-[6px]">kHz</span>
          </div>
        </div>
        <div className="h-[15px] flex items-center gap-[2px]">
          <span>LO ppm</span>
          <Slider label="LO ppm" start={51} />
          <span>0.2</span>
        </div>
        <div className="h-[17px] pb-[3px] flex items-center gap-[2px] border-b border-[#4c4c4c] mb-[3px]">
          <span className="w-[14px]">Auto</span>
          <button className="w-[17px] h-[11px] rounded-[1px] bg-[#b06d29] leading-[11px]">DC</button>
          <button className="w-[14px] h-[11px] rounded-[1px] bg-[#b06d29] leading-[11px]">IQ</button>
          <button className="w-[20px] h-[11px] rounded-[1px] bg-[#555] leading-[11px]">BBF</button>
          <label className="ml-auto flex items-center gap-[3px]">
            Bias T
            <input type="checkbox" className="size-[7px] appearance-none bg-[#191919]" />
          </label>
          <label className="relative ml-[3px] flex items-center gap-[2px]">
            RF Amp
            <input type="checkbox" defaultChecked className="peer size-[7px] appearance-none bg-[#191919]" />
            <svg viewBox="0 0 7 7" className="absolute right-0 size-[7px] hidden peer-checked:block pointer-events-none">
              <path d="M1 4l2 2 3-5" fill="none" stroke="#fff" />
            </svg>
          </label>
          <button className="w-[13px] h-[11px] bg-[#484848] leading-[11px]">X</button>
        </div>
        <div className="h-[17px] flex items-center gap-[1px]">
          <button className="w-[13px] h-[11px] bg-[#484848] leading-[11px]">SR</button>
          <Dial label="Sample rate" digits="08,000,000" size="w-[76px] h-[16px] text-[10px]" color="text-[#a0cc72]" />
          <span className="pl-px">S/s</span>
          <span className="ml-auto pr-[2px]">Dec.</span>
          <Drop label="Decimation" value="1" width="w-[23px]" />
        </div>
        <div className="h-[18px] flex items-center gap-[2px] border-b border-[#686868] mb-px">
          <span>Fc pos</span>
          <Drop label="Fc position" value="Cen" width="w-[27px]" />
          <span className="ml-auto">BBF</span>
          <Drop label="BBF filter" value="8.00M" width="w-[37px]" />
        </div>
        <div className="h-[12px] flex items-center gap-[2px]">
          <span className="w-[14px]">LNA</span>
          <Slider label="LNA" start={100} />
          <span className="w-[23px] text-right">40dB</span>
        </div>
        <div className="h-[12px] flex items-center gap-[2px]">
          <span className="w-[14px]">VGA</span>
          <Slider label="VGA" start={100} />
          <span className="w-[23px] text-right">62dB</span>
        </div>
      </div>
      <footer className="h-[10px] flex gap-px bg-[#222]">
        <BarButton label="Spectrum"><Peak filled /></BarButton>
        <BarButton label="Channel"><Tripod /></BarButton>
      </footer>
    </section>
  );
}

const menus = ['File', 'View', 'Workspaces', 'Preferences', 'Help'];

export default function App() {
  return (
    <div className="min-h-screen flex flex-col bg-[#424242] text-[#dedede] text-[7px] leading-[8px] font-['Liberation_Sans',sans-serif]">
      <nav className="h-[8px] pl-[5px] flex gap-[6px] leading-[7px]">
        {menus.map((m) => (
          <button key={m}>
            <u>{m[0]}</u>
            {m.slice(1)}
          </button>
        ))}
      </nav>
      <div className="flex-1 flex">
        <aside className="w-[14px] pt-[2px] flex flex-col gap-[2px]">
          {['W0', 'W1'].map((w) => (
            <button
              key={w}
              className="w-[13px] h-[21px] flex items-center justify-center rounded-l-[2px] border border-[#333] bg-[#3a3a3a] [writing-mode:vertical-rl] rotate-180"
            >
              {w}
            </button>
          ))}
        </aside>
        <div className="flex-1 min-w-0 flex flex-col">
          <TopBar />
          <main className="flex-1 grid grid-cols-2 bg-[#292929]">
            <div className="min-w-0 grid bg-[#424242]">
              <AdsbPanel />
            </div>
            <div className="min-w-0 pl-px">
              <div className="bg-[#424242]">
                <SpectrumPanel />
              </div>
              <DevicePanel />
            </div>
          </main>
        </div>
      </div>
      <footer className="h-[11px] pr-[14px] text-right text-[6px] leading-[11px] font-['Noto_Sans']">
        SDRangel 7.22.6 Qt 5.15.13 OpenGL 4.6 x86_64 Manjaro Linux&nbsp; 2025-05-01 19:00:50 CEST
      </footer>
    </div>
  );
}
